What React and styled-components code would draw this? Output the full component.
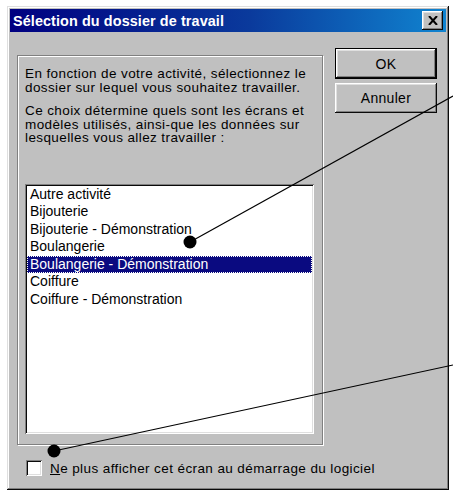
import React from 'react';
import styled, { createGlobalStyle } from 'styled-components';

const GlobalStyle = createGlobalStyle`
  html, body {
    margin: 0;
    padding: 0;
    background: #ffffff;
  }
  body {
    font-family: "Liberation Sans", Arial, sans-serif;
    color: #000;
  }
`;

const Stage = styled.div`
  position: relative;
  width: 453px;
  height: 492px;
  overflow: hidden;
  padding: 6px 0 0 7px;
  box-sizing: border-box;
`;

const Window = styled.div`
  width: 442px;
  height: 484px;
  box-sizing: border-box;
  padding: 3px;
  background: #c0c0c0;
  box-shadow: inset -1px -1px #0a0a0a, inset 1px 1px #dfdfdf,
    inset -2px -2px #808080, inset 2px 2px #ffffff;
  display: flex;
  flex-direction: column;
`;

const TitleBar = styled.div`
  flex: 0 0 23px;
  background: linear-gradient(90deg, #000080 0%, #0a3a9c 55%, #1084d0 100%);
  display: flex;
  align-items: center;
  justify-content: space-between;
  padding: 0 3px 0 3px;
`;

const Title = styled.span`
  color: #fff;
  font-family: "Liberation Sans", Arial, sans-serif;
  font-weight: bold;
  font-size: 14.4px;
  letter-spacing: 0.1px;
`;

const CloseButton = styled.div`
  width: 21px;
  height: 19px;
  background: #c0c0c0;
  box-shadow: inset -1px -1px #0a0a0a, inset 1px 1px #ffffff,
    inset -2px -2px #808080, inset 2px 2px #dfdfdf;
  display: flex;
  align-items: center;
  justify-content: center;
`;

const Content = styled.div`
  flex: 1;
  display: grid;
  grid-template-columns: 306px 102px;
  align-items: start;
  column-gap: 12px;
  padding: 16px 9px 0 7px;
`;

const LeftColumn = styled.div`
  display: flex;
  flex-direction: column;
  padding-top: 7px;
`;

const Group = styled.div`
  height: 390px;
  box-sizing: border-box;
  border: 1px solid #808080;
  box-shadow: 1px 1px 0 #ffffff, inset 1px 1px 0 #ffffff;
  padding: 11px 8px 0 7px;
  display: flex;
  flex-direction: column;
`;

const Paragraph = styled.p`
  margin: 0 0 9.6px 0;
  font-size: 13.5px;
  letter-spacing: 0.4px;
  line-height: 13.7px;
  white-space: nowrap;
`;

const ListBox = styled.ul`
  list-style: none;
  margin: 29px 0 0 0;
  padding: 2px;
  height: 250px;
  box-sizing: border-box;
  background: #fff;
  box-shadow: inset 1px 1px #808080, inset -1px -1px #ffffff,
    inset 2px 2px #0a0a0a, inset -2px -2px #dfdfdf;
`;

const Item = styled.li`
  height: 17.5px;
  line-height: 17.5px;
  font-size: 14px;
  padding-left: 3px;
  box-sizing: border-box;
  white-space: nowrap;
  background: ${(p) => (p.$selected ? '#0a0a80' : 'transparent')};
  color: ${(p) => (p.$selected ? '#ffffff' : '#000000')};
  outline: ${(p) => (p.$selected ? '1px dotted #ffffff' : 'none')};
  outline-offset: -1px;
`;

const CheckRow = styled.label`
  display: flex;
  align-items: center;
  gap: 8px;
  margin-top: 15px;
  padding-left: 9px;
  font-size: 13.5px;
  letter-spacing: 0.4px;
  white-space: nowrap;
`;

const CheckBox = styled.span`
  flex: 0 0 16px;
  height: 16px;
  background: #fff;
  box-shadow: inset 1px 1px #808080, inset -1px -1px #ffffff,
    inset 2px 2px #0a0a0a, inset -2px -2px #dfdfdf;
`;

const Buttons = styled.div`
  display: flex;
  flex-direction: column;
  gap: 4px;
`;

const Button = styled.div`
  height: ${(p) => (p.$default ? '31px' : '30px')};
  box-sizing: border-box;
  background: #c0c0c0;
  display: flex;
  align-items: center;
  justify-content: center;
  font-size: 14px;
  letter-spacing: 0.3px;
  border: ${(p) => (p.$default ? '1px solid #000' : 'none')};
  box-shadow: inset -1px -1px #0a0a0a, inset 1px 1px #ffffff,
    inset -2px -2px #808080, inset 2px 2px #dfdfdf;
`;

const Overlay = styled.svg`
  position: absolute;
  left: 0;
  top: 0;
  pointer-events: none;
`;

const items = [
  'Autre activité',
  'Bijouterie',
  'Bijouterie - Démonstration',
  'Boulangerie',
  'Boulangerie - Démonstration',
  'Coiffure',
  'Coiffure - Démonstration',
];

export default function App() {
  return (
    <>
      <GlobalStyle />
      <Stage>
        <Window>
          <TitleBar>
            <Title>Sélection du dossier de travail</Title>
            <CloseButton>
              <svg width="10" height="9" viewBox="0 0 10 9">
                <path d="M1 0 L9 9 M9 0 L1 9" stroke="#000" strokeWidth="2" />
              </svg>
            </CloseButton>
          </TitleBar>
          <Content>
            <LeftColumn>
              <Group>
                <Paragraph>
                  En fonction de votre activité, sélectionnez le
                  <br />
                  dossier sur lequel vous souhaitez travailler.
                </Paragraph>
                <Paragraph>
                  Ce choix détermine quels sont les écrans et
                  <br />
                  modèles utilisés, ainsi-que les données sur
                  <br />
                  lesquelles vous allez travailler :
                </Paragraph>
                <ListBox>
                  {items.map((it) => (
                    <Item key={it} $selected={it === 'Boulangerie - Démonstration'}>
                      {it}
                    </Item>
                  ))}
                </ListBox>
              </Group>
              <CheckRow>
                <CheckBox />
                <span>
                  <u>N</u>e plus afficher cet écran au démarrage du logiciel
                </span>
              </CheckRow>
            </LeftColumn>
            <Buttons>
              <Button $default>OK</Button>
              <Button>Annuler</Button>
            </Buttons>
          </Content>
        </Window>
        <Overlay width="453" height="492" viewBox="0 0 453 492">
          <line x1="190" y1="242" x2="453" y2="96" stroke="#000" strokeWidth="1.2" />
          <circle cx="190" cy="242" r="6.5" fill="#000" />
          <line x1="54" y1="451" x2="453" y2="365" stroke="#000" strokeWidth="1.2" />
          <circle cx="54" cy="451" r="6.5" fill="#000" />
        </Overlay>
      </Stage>
    </>
  );
}
